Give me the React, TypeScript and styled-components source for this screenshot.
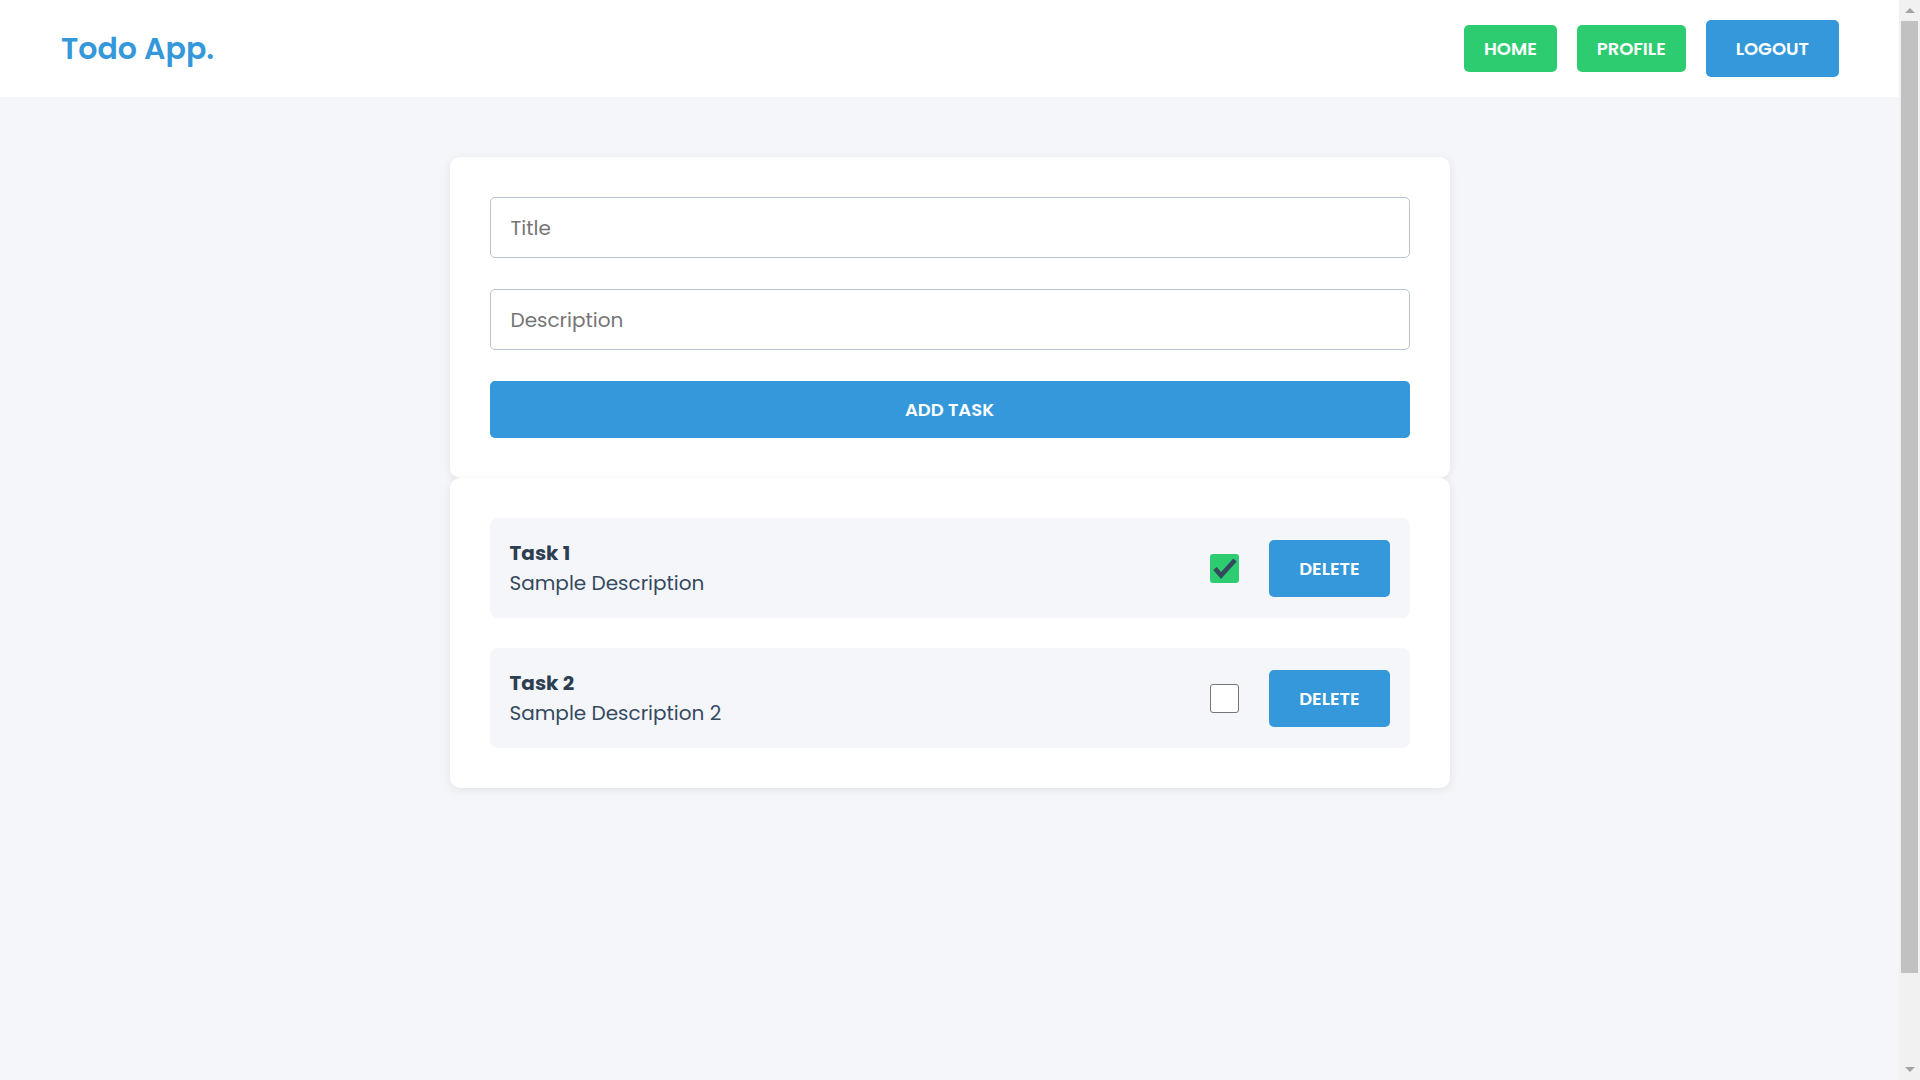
import React, { useState } from "react";
import styled, { createGlobalStyle, css } from "styled-components";

const GlobalStyle = createGlobalStyle`
  html, body {
    margin: 0;
    padding: 0;
  }
  html { scrollbar-width: none; }
  ::-webkit-scrollbar { display: none; }
  body {
    background: #f5f6fa;
    font-family: "Poppins", "Open Sans", "Noto Sans", sans-serif;
    color: #34495e;
  }
  * { box-sizing: border-box; }
`;

const Page = styled.div`
  margin-right: 21px;
`;

const ScrollTrack = styled.div`
  position: fixed;
  top: 0;
  right: 0;
  bottom: 0;
  width: 21px;
  background: #f1f1f1;
  display: flex;
  flex-direction: column;
  align-items: center;
`;

const ScrollArrow = styled.div<{ $dir: "up" | "down" }>`
  width: 21px;
  height: 21px;
  display: flex;
  align-items: center;
  justify-content: center;
  &::before {
    content: "";
    width: 0;
    height: 0;
    border-left: 5px solid transparent;
    border-right: 5px solid transparent;
    ${(p) =>
      p.$dir === "up"
        ? css`
            border-bottom: 5px solid #a3a3a3;
          `
        : css`
            border-top: 5px solid #a3a3a3;
          `}
  }
`;

const ScrollThumb = styled.div`
  width: 17px;
  height: 952px;
  background: #c1c1c1;
`;

const ScrollSpacer = styled.div`
  flex: 1;
`;

const Header = styled.header`
  display: flex;
  align-items: center;
  justify-content: space-between;
  height: 97px;
  padding: 0 60px;
  background: #ffffff;
`;

const Logo = styled.div`
  font-size: 30px;
  font-weight: 600;
  color: #3498db;
  margin-left: 1px;
`;

const Nav = styled.nav`
  display: flex;
  align-items: center;
  gap: 20px;
`;

const Button = styled.button<{ $tone: "green" | "blue"; $size: "sm" | "lg" }>`
  border: none;
  border-radius: 5px;
  color: #ffffff;
  font-family: inherit;
  font-size: 18px;
  line-height: 27px;
  font-weight: 600;
  text-transform: uppercase;
  cursor: pointer;
  background: ${(p) => (p.$tone === "green" ? "#2ecc71" : "#3498db")};
  ${(p) =>
    p.$size === "sm"
      ? css`
          padding: 10px 20px;
        `
      : css`
          padding: 15px 30px;
        `}
`;

const Main = styled.main`
  min-height: 100vh;
  padding: 60px 0;
`;

const Container = styled.div`
  width: 1000px;
  margin: 0 auto;
`;

const Card = styled.section`
  background: #ffffff;
  border-radius: 10px;
  padding: 40px;
  box-shadow: 0 2px 10px rgba(0, 0, 0, 0.08);
  display: flex;
  flex-direction: column;
  gap: 30px;
`;

const FormCard = styled(Card)`
  gap: 31px;
`;

const Input = styled.input`
  width: 100%;
  height: 61px;
  padding: 0 20px;
  border: 1px solid #b8c4d3;
  border-radius: 5px;
  font-family: inherit;
  font-size: 20px;
  color: #34495e;
  background: #ffffff;
  outline: none;
  &::placeholder {
    color: #757575;
  }
`;

const WideButton = styled(Button)`
  width: 100%;
`;

const Row = styled.div`
  display: flex;
  align-items: center;
  justify-content: space-between;
  height: 100px;
  padding: 0 16px 0 20px;
  background: #f5f6fa;
  border-radius: 8px;
`;

const TaskText = styled.div`
  display: flex;
  flex-direction: column;
`;

const TaskTitle = styled.div`
  font-size: 20px;
  line-height: 30px;
  font-weight: 700;
  color: #2c3e50;
`;

const TaskDesc = styled.div`
  font-size: 20px;
  line-height: 30px;
  color: #34495e;
`;

const Actions = styled.div`
  display: flex;
  align-items: center;
  gap: 30px;
  padding-right: 4px;
`;

const Check = styled.span<{ $checked: boolean }>`
  display: inline-flex;
  align-items: center;
  justify-content: center;
  width: 29px;
  height: 29px;
  border-radius: 3px;
  cursor: pointer;
  ${(p) =>
    p.$checked
      ? css`
          background: #2ecc71;
        `
      : css`
          background: #ffffff;
          border: 1.5px solid #767676;
        `}
`;

const CheckMark = () => (
  <svg width="29" height="29" viewBox="0 0 29 29">
    <path d="M5 14.5 L11 21.5 L25 6" fill="none" stroke="#34495e" strokeWidth="4.6" strokeLinejoin="miter" />
  </svg>
);

type Task = { id: number; title: string; description: string; done: boolean };

export default function App() {
  const [tasks, setTasks] = useState<Task[]>([
    { id: 1, title: "Task 1", description: "Sample Description", done: true },
    { id: 2, title: "Task 2", description: "Sample Description 2", done: false },
  ]);

  const toggle = (id: number) =>
    setTasks((ts) => ts.map((t) => (t.id === id ? { ...t, done: !t.done } : t)));
  const remove = (id: number) => setTasks((ts) => ts.filter((t) => t.id !== id));

  return (
    <>
      <GlobalStyle />
      <Page>
        <Header>
          <Logo>Todo App.</Logo>
          <Nav>
            <Button $tone="green" $size="sm">Home</Button>
            <Button $tone="green" $size="sm">Profile</Button>
            <Button $tone="blue" $size="lg">Logout</Button>
          </Nav>
        </Header>
        <Main>
          <Container>
            <FormCard as="form" onSubmit={(e: React.FormEvent) => e.preventDefault()}>
              <Input placeholder="Title" />
              <Input placeholder="Description" />
              <WideButton $tone="blue" $size="lg" type="submit">Add Task</WideButton>
            </FormCard>
            <Card>
              {tasks.map((t) => (
                <Row key={t.id}>
                  <TaskText>
                    <TaskTitle>{t.title}</TaskTitle>
                    <TaskDesc>{t.description}</TaskDesc>
                  </TaskText>
                  <Actions>
                    <Check $checked={t.done} onClick={() => toggle(t.id)}>
                      {t.done && <CheckMark />}
                    </Check>
                    <Button $tone="blue" $size="lg" onClick={() => remove(t.id)}>Delete</Button>
                  </Actions>
                </Row>
              ))}
            </Card>
          </Container>
        </Main>
      </Page>
      <ScrollTrack aria-hidden>
        <ScrollArrow $dir="up" />
        <ScrollThumb />
        <ScrollSpacer />
        <ScrollArrow $dir="down" />
      </ScrollTrack>
    </>
  );
}
